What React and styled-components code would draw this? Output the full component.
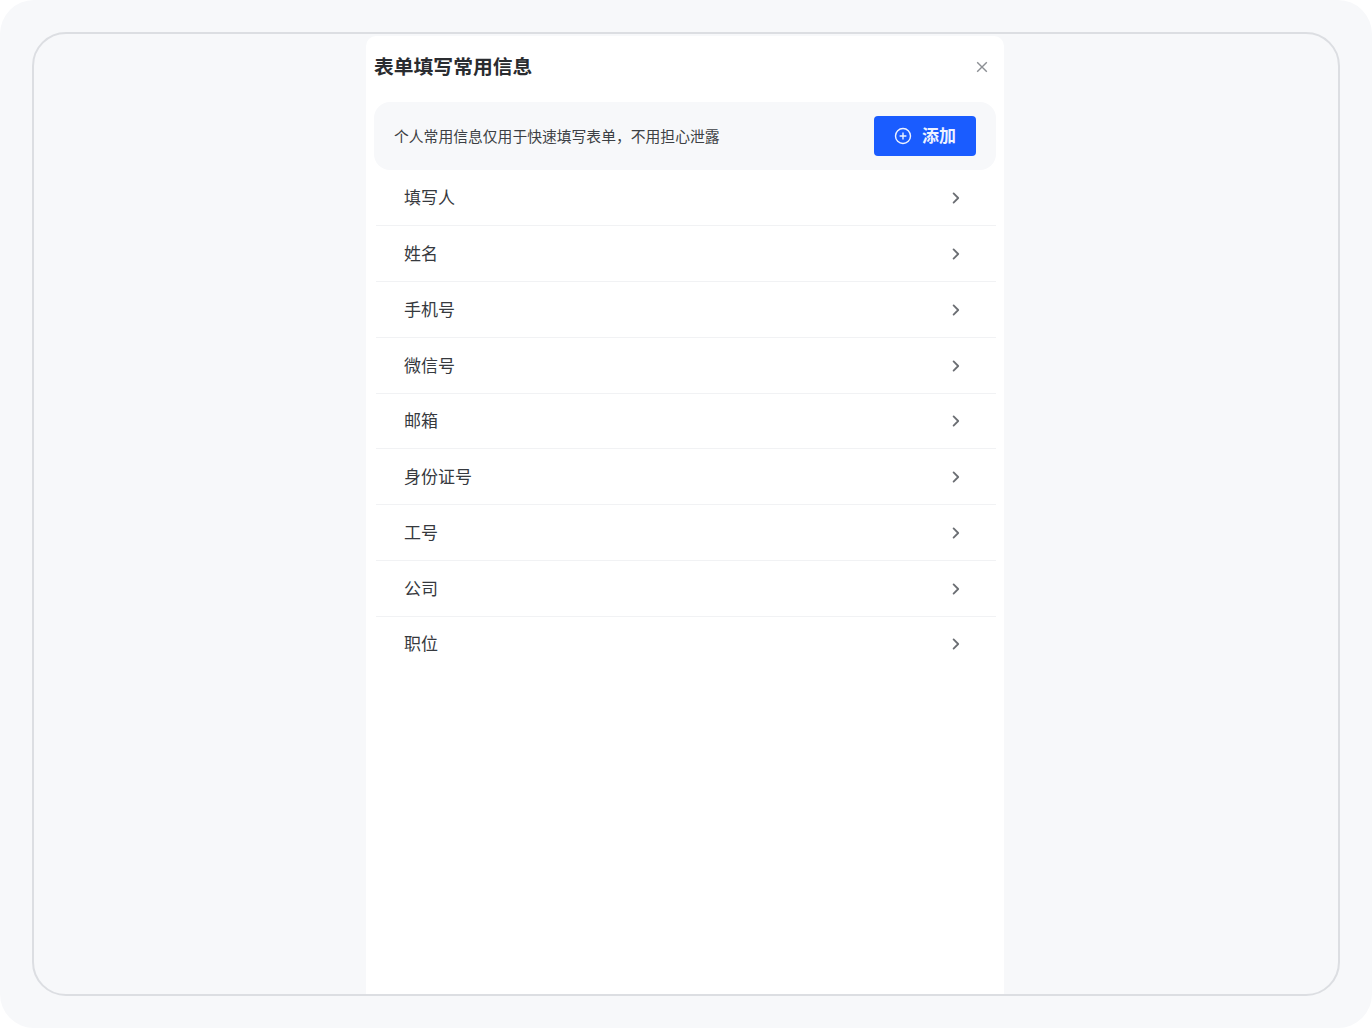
import React from 'react';
import styled, { createGlobalStyle } from 'styled-components';

const GlobalStyle = createGlobalStyle`
  html, body {
    margin: 0;
    padding: 0;
    background: #fff;
  }
  body {
    font-family: "Liberation Sans", "Noto Sans CJK SC", sans-serif;
  }
`;

const Page = styled.div`
  box-sizing: border-box;
  width: 1372px;
  height: 1028px;
  padding: 32px;
  background: #f7f8fa;
  border-radius: 34px;
`;

const Device = styled.div`
  box-sizing: border-box;
  width: 1308px;
  height: 964px;
  padding-top: 2px;
  display: flex;
  justify-content: center;
  border: 2px solid #dcdee2;
  border-radius: 34px;
  background: #f7f8fa;
`;

const Sheet = styled.div`
  box-sizing: border-box;
  width: 638px;
  margin-right: 2px;
  padding: 0 8px;
  background: #fff;
  border-radius: 10px 10px 0 0;
`;

const Header = styled.div`
  height: 66px;
  display: flex;
  align-items: center;
  justify-content: space-between;
  padding: 0 8px 4px 0;
  box-sizing: border-box;
`;

const Title = styled.h1`
  margin: 0;
  font-size: 19.8px;
  font-weight: 700;
  line-height: 28px;
  color: #2a2c30;
`;

const CloseButton = styled.button`
  width: 12px;
  height: 12px;
  padding: 0;
  display: flex;
  border: 0;
  background: none;
  color: #8c8f94;
`;

const Notice = styled.div`
  box-sizing: border-box;
  height: 68px;
  display: flex;
  align-items: center;
  justify-content: space-between;
  padding: 0 20px;
  background: #f7f8fa;
  border-radius: 16px;
`;

const NoticeText = styled.span`
  margin-top: -2px;
  font-size: 14.8px;
  color: #3c3f44;
`;

const AddButton = styled.button`
  box-sizing: border-box;
  width: 102px;
  height: 40px;
  display: flex;
  align-items: center;
  justify-content: center;
  gap: 10px;
  padding: 0;
  border: 0;
  border-radius: 4px;
  background: #1a5cff;
  color: #eef2ff;
  font-family: inherit;
  font-size: 17px;
  font-weight: 600;
  line-height: 20px;
`;

const ButtonLabel = styled.span`
  margin-top: 2px;
`;

const List = styled.ul`
  margin: 0;
  padding: 0.5px 0 0;
  list-style: none;
`;

const Row = styled.li`
  box-sizing: border-box;
  height: 55.75px;
  margin-left: 2px;
  display: flex;
  align-items: center;
  justify-content: space-between;
  padding: 0 35px 0 28px;
  border-bottom: 1px solid ${({ $last }) => ($last ? 'transparent' : '#f1f2f4')};
  font-size: 17px;
  color: #36393e;
`;

const RowLabel = styled.span`
  margin-top: -2px;
`;

const Chevron = styled.svg`
  width: 10px;
  height: 14px;
  margin-top: 1px;
  fill: none;
  stroke: #6b6e73;
  stroke-width: 1.8;
  stroke-linecap: round;
  stroke-linejoin: round;
`;

const fields = ['填写人', '姓名', '手机号', '微信号', '邮箱', '身份证号', '工号', '公司', '职位'];

const App = () => (
  <>
    <GlobalStyle />
    <Page>
      <Device>
        <Sheet>
          <Header>
            <Title>表单填写常用信息</Title>
            <CloseButton aria-label="关闭">
              <svg width="12" height="12" viewBox="0 0 12 12" fill="none" stroke="currentColor" strokeWidth="1.4">
                <path d="M1.2 1.2l9.6 9.6M10.8 1.2l-9.6 9.6" />
              </svg>
            </CloseButton>
          </Header>
          <Notice>
            <NoticeText>个人常用信息仅用于快速填写表单，不用担心泄露</NoticeText>
            <AddButton>
              <svg width="18" height="18" viewBox="0 0 18 18" fill="none" stroke="currentColor" strokeWidth="1.4">
                <circle cx="9" cy="9" r="7.5" />
                <path d="M9 5.6v6.8M5.6 9h6.8" />
              </svg>
              <ButtonLabel>添加</ButtonLabel>
            </AddButton>
          </Notice>
          <List>
            {fields.map((name, i) => (
              <Row key={name} $last={i === fields.length - 1}>
                <RowLabel>{name}</RowLabel>
                <Chevron viewBox="0 0 10 14">
                  <path d="M2.6 2.4L7.2 7l-4.6 4.6" />
                </Chevron>
              </Row>
            ))}
          </List>
        </Sheet>
      </Device>
    </Page>
  </>
);

export default App;
